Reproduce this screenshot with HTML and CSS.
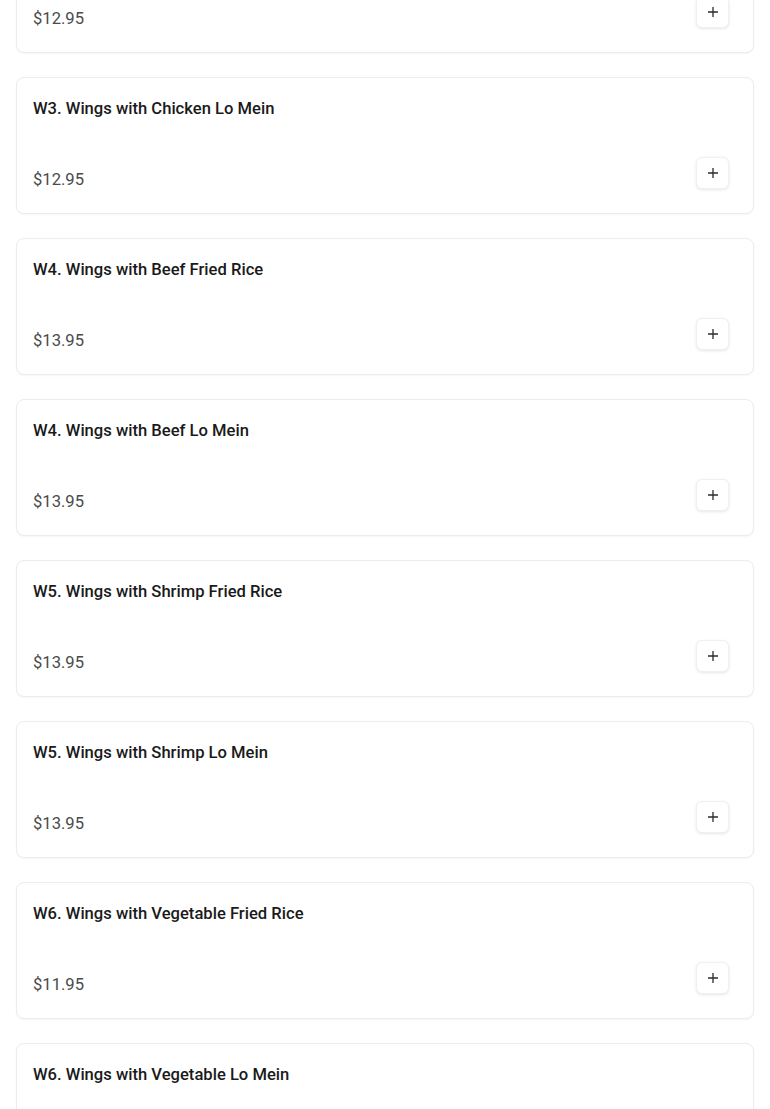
FILE: index.html
```html
<!DOCTYPE html>
<html lang="en">
<head>
  <meta charset="UTF-8">
  <meta name="viewport" content="width=device-width, initial-scale=1.0">
  <title>Menu - Wings Combos</title>
  <link rel="stylesheet" href="styles.css">
</head>
<body>
  <main class="menu-list">
    <div class="menu-card">
      <h3 class="item-name">W3. Wings with Chicken Fried Rice</h3>
      <div class="item-footer">
        <span class="item-price">$12.95</span>
        <button class="add-btn" aria-label="Add to cart">
          <svg viewBox="0 0 12 12" width="12" height="12"><path d="M6 1v10M1 6h10" /></svg>
        </button>
      </div>
    </div>

    <div class="menu-card">
      <h3 class="item-name">W3. Wings with Chicken Lo Mein</h3>
      <div class="item-footer">
        <span class="item-price">$12.95</span>
        <button class="add-btn" aria-label="Add to cart">
          <svg viewBox="0 0 12 12" width="12" height="12"><path d="M6 1v10M1 6h10" /></svg>
        </button>
      </div>
    </div>

    <div class="menu-card">
      <h3 class="item-name">W4. Wings with Beef Fried Rice</h3>
      <div class="item-footer">
        <span class="item-price">$13.95</span>
        <button class="add-btn" aria-label="Add to cart">
          <svg viewBox="0 0 12 12" width="12" height="12"><path d="M6 1v10M1 6h10" /></svg>
        </button>
      </div>
    </div>

    <div class="menu-card">
      <h3 class="item-name">W4. Wings with Beef Lo Mein</h3>
      <div class="item-footer">
        <span class="item-price">$13.95</span>
        <button class="add-btn" aria-label="Add to cart">
          <svg viewBox="0 0 12 12" width="12" height="12"><path d="M6 1v10M1 6h10" /></svg>
        </button>
      </div>
    </div>

    <div class="menu-card">
      <h3 class="item-name">W5. Wings with Shrimp Fried Rice</h3>
      <div class="item-footer">
        <span class="item-price">$13.95</span>
        <button class="add-btn" aria-label="Add to cart">
          <svg viewBox="0 0 12 12" width="12" height="12"><path d="M6 1v10M1 6h10" /></svg>
        </button>
      </div>
    </div>

    <div class="menu-card">
      <h3 class="item-name">W5. Wings with Shrimp Lo Mein</h3>
      <div class="item-footer">
        <span class="item-price">$13.95</span>
        <button class="add-btn" aria-label="Add to cart">
          <svg viewBox="0 0 12 12" width="12" height="12"><path d="M6 1v10M1 6h10" /></svg>
        </button>
      </div>
    </div>

    <div class="menu-card">
      <h3 class="item-name">W6. Wings with Vegetable Fried Rice</h3>
      <div class="item-footer">
        <span class="item-price">$11.95</span>
        <button class="add-btn" aria-label="Add to cart">
          <svg viewBox="0 0 12 12" width="12" height="12"><path d="M6 1v10M1 6h10" /></svg>
        </button>
      </div>
    </div>

    <div class="menu-card">
      <h3 class="item-name">W6. Wings with Vegetable Lo Mein</h3>
      <div class="item-footer">
        <span class="item-price">$11.95</span>
        <button class="add-btn" aria-label="Add to cart">
          <svg viewBox="0 0 12 12" width="12" height="12"><path d="M6 1v10M1 6h10" /></svg>
        </button>
      </div>
    </div>
  </main>
</body>
</html>
```

FILE: styles.css
```css
:root {
  --text-color: #1a1a1a;
  --price-color: #4a4a4a;
  --card-border: #ececec;
  --card-bg: #ffffff;
}

* {
  margin: 0;
  padding: 0;
  box-sizing: border-box;
}

body {
  font-family: Roboto, 'Liberation Sans', sans-serif;
  background: #ffffff;
  color: var(--text-color);
}

/* list is scrolled: first card sits partly above the viewport */
.menu-list {
  display: flex;
  flex-direction: column;
  gap: 24px;
  padding: 0 16px;
  margin-top: -84px;
}

.menu-card {
  background: var(--card-bg);
  border: 1px solid var(--card-border);
  border-radius: 8px;
  box-shadow: 0 1px 2px rgba(0, 0, 0, 0.04);
  padding: 17px 24px 21px 16px;
  height: 137px;
  display: flex;
  flex-direction: column;
}

.item-name {
  font-size: 16.6px;
  font-weight: 500;
  line-height: 28px;
  color: var(--text-color);
}

.item-footer {
  margin-top: auto;
  display: flex;
  justify-content: space-between;
  align-items: flex-end;
}

.item-price {
  font-size: 16.6px;
  font-weight: 400;
  line-height: 24px;
  color: var(--price-color);
}

.add-btn {
  width: 33px;
  height: 32px;
  margin-bottom: 3px;
  display: flex;
  align-items: center;
  justify-content: center;
  background: #ffffff;
  border: 1px solid #f0f0f0;
  border-radius: 6px;
  box-shadow: 0 1px 3px rgba(0, 0, 0, 0.1);
  cursor: pointer;
}

.add-btn svg {
  stroke: #2b2b2b;
  stroke-width: 1.3;
  fill: none;
}
```
